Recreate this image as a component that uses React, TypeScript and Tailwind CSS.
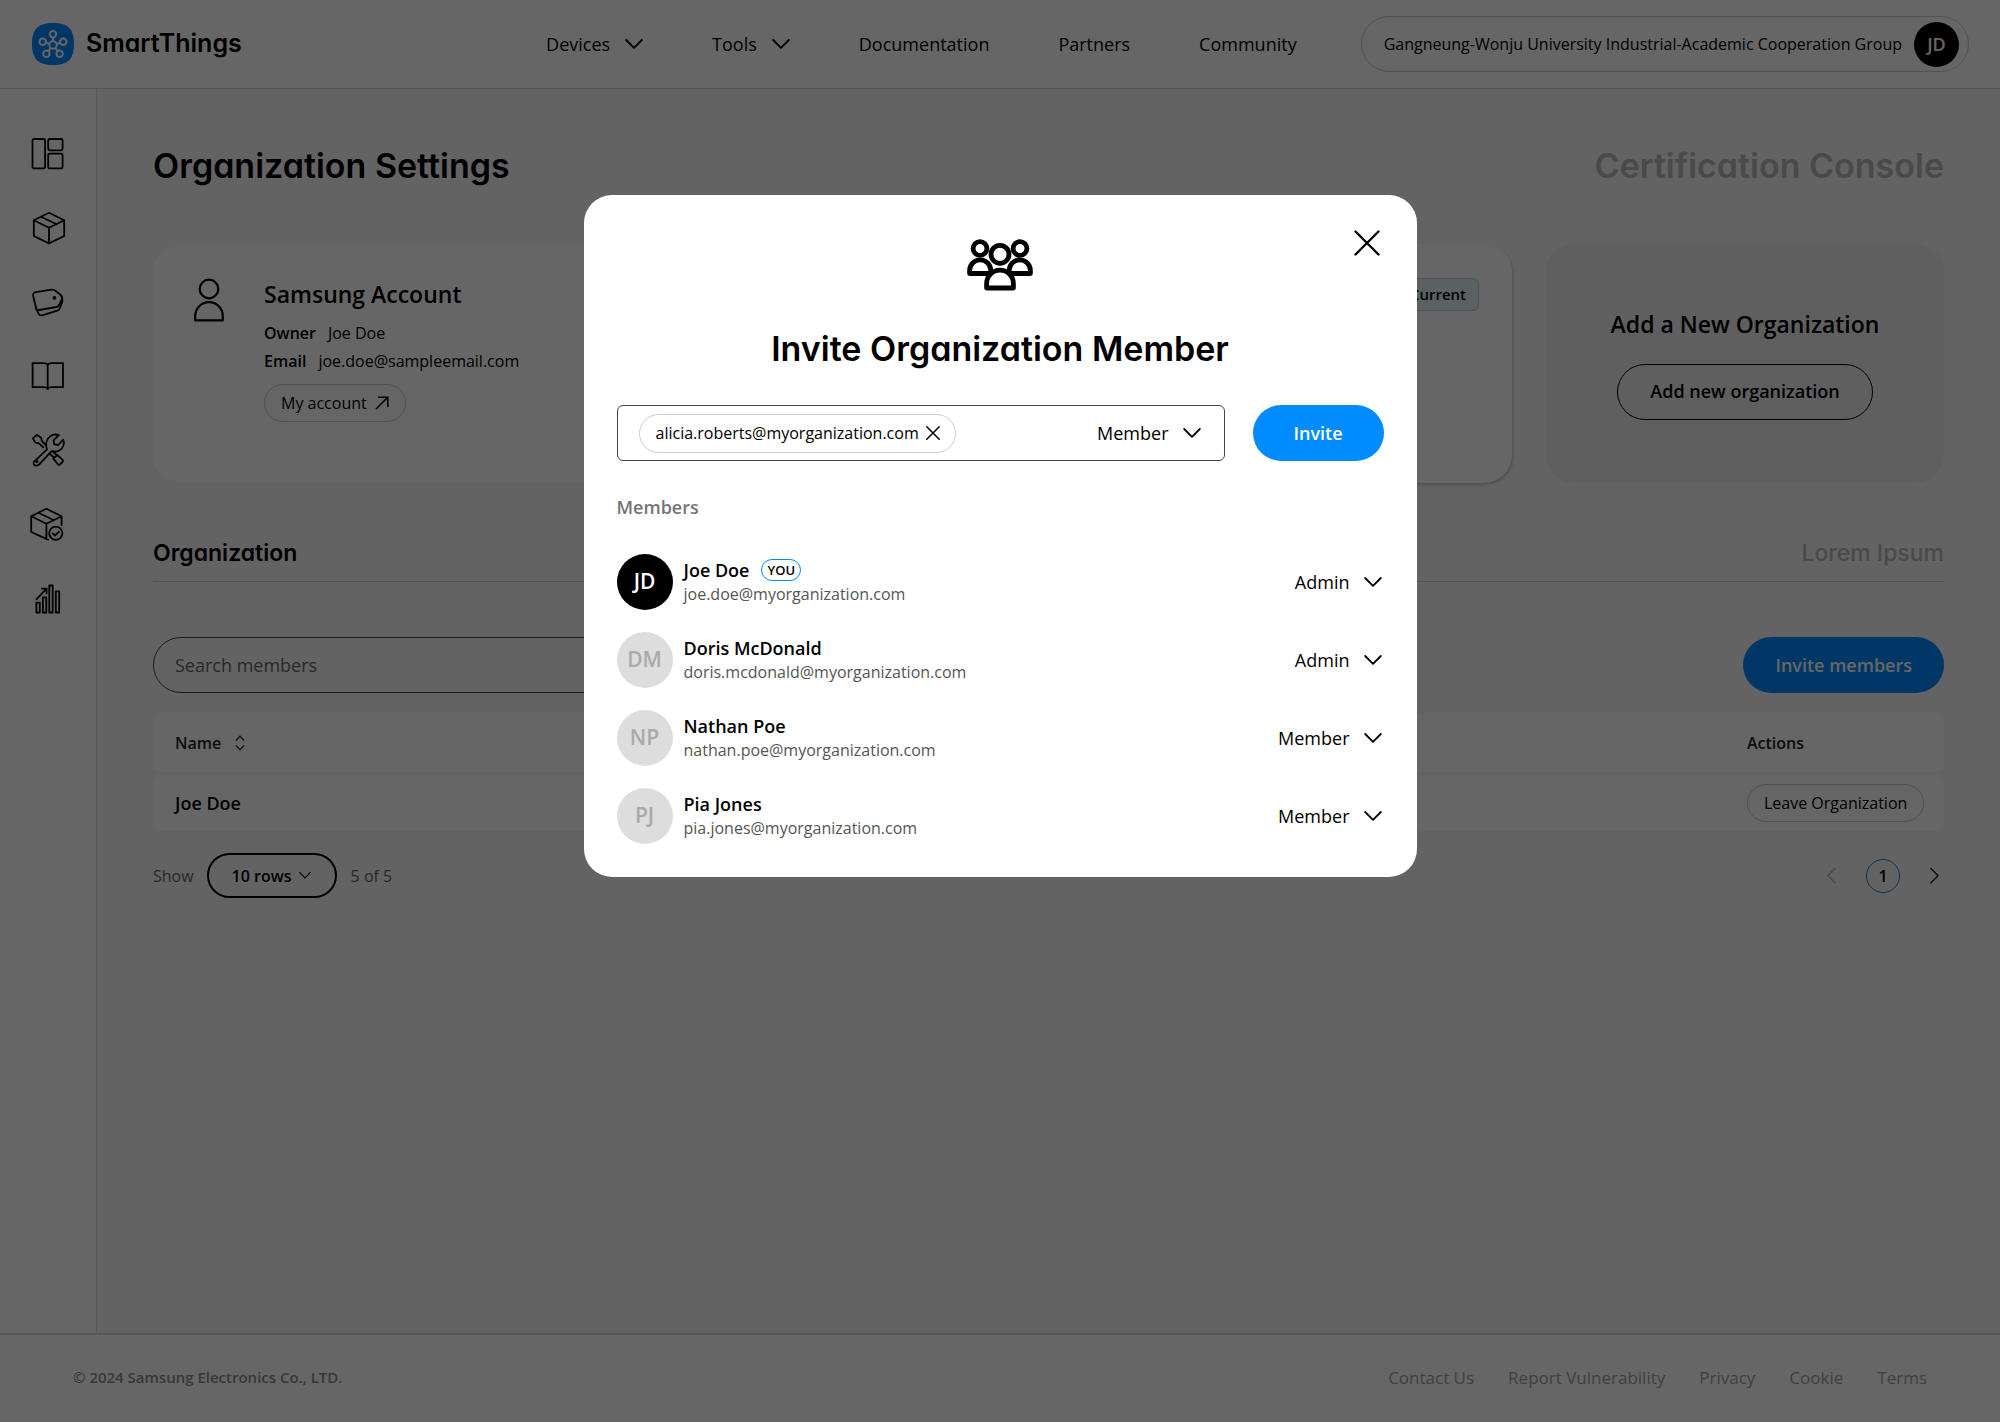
import React from "react";

type IconProps = { className?: string };

const display = "font-['Inter',sans-serif] [font-feature-settings:'cv11']";

function Chevron({ className = "w-[18px] [stroke-width:1.8]" }: IconProps) {
  return (
    <svg viewBox="0 0 18 10" className={className} fill="none" stroke="currentColor" strokeLinecap="round" strokeLinejoin="round" aria-hidden="true">
      <path d="M1.2 1 9 8.8 16.8 1" />
    </svg>
  );
}

function Cross({ className = "w-[26px] [stroke-width:2.4]" }: IconProps) {
  return (
    <svg viewBox="0 0 26 26" className={className} fill="none" stroke="currentColor" strokeLinecap="round" aria-hidden="true">
      <path d="M1.5 1.5 24.5 24.5M24.5 1.5 1.5 24.5" />
    </svg>
  );
}

function LogoMark() {
  return (
    <svg viewBox="0 0 42 42" className="w-[42px]" fill="none" stroke="white" strokeWidth="2" aria-hidden="true">
      <path d="M21 0C36 0 42 6 42 21S36 42 21 42 0 36 0 21 6 0 21 0Z" fill="#008bff" stroke="none" />
      <circle cx="21" cy="22" r="3.7" />
      <circle cx="21" cy="11.3" r="3.2" />
      <circle cx="10.7" cy="18.7" r="3.2" />
      <circle cx="31.3" cy="18.7" r="3.2" />
      <circle cx="14.4" cy="30.8" r="3.2" />
      <circle cx="27.6" cy="30.8" r="3.2" />
      <path d="M21 14.5v3.8M13.8 19.7l3.6 1.2M28.2 19.7l-3.6 1.2M16.3 28.2l2.5-3.3M25.7 28.2l-2.5-3.3" />
    </svg>
  );
}

function PeopleIcon() {
  return (
    <svg viewBox="0 0 66 52" className="w-[66px]" fill="white" stroke="black" strokeWidth="4.8" strokeLinejoin="round" aria-hidden="true">
      <circle cx="13" cy="9.5" r="6.9" />
      <circle cx="53" cy="9.5" r="6.9" />
      <path d="M2.6 34.5V31.5a10.6 10.6 0 0 1 21.2 0V34.5Z" />
      <path d="M42.2 34.5V31.5a10.6 10.6 0 0 1 21.2 0V34.5Z" />
      <circle cx="33" cy="15.3" r="9" />
      <path d="M19.6 49V44.5a13.4 13.4 0 0 1 26.8 0V49Z" />
    </svg>
  );
}

function UserIcon() {
  return (
    <svg viewBox="0 0 30 44" className="w-[30px]" fill="none" stroke="currentColor" strokeWidth="2.2" strokeLinejoin="round" aria-hidden="true">
      <circle cx="15" cy="11" r="9.3" />
      <path d="M1.2 42.4V38a13.8 13.8 0 0 1 27.6 0v4.4Z" />
    </svg>
  );
}

function Nav36({ children }: { children: React.ReactNode }) {
  return (
    <svg viewBox="0 0 36 36" className="size-9" fill="none" stroke="currentColor" strokeWidth="1.8" strokeLinejoin="round" strokeLinecap="round" aria-hidden="true">
      {children}
    </svg>
  );
}

const sideItems = [
  {
    label: "Dashboard",
    icon: (
      <Nav36>
        <rect x="2.5" y="3" width="12.6" height="29.4" rx="1.5" />
        <rect x="18.2" y="3" width="14.4" height="11.3" rx="1.5" />
        <rect x="18.2" y="17.6" width="14.4" height="14.8" rx="1.5" />
      </Nav36>
    ),
  },
  {
    label: "Products",
    icon: (
      <Nav36>
        <path d="M19 2.8 34.2 10.3V26L19 33.4 3.8 26V10.3ZM3.8 10.3 19 17.8 34.2 10.3M19 17.8V33.4M11 6.7 26.6 14.2" />
      </Nav36>
    ),
  },
  {
    label: "Tags",
    icon: (
      <Nav36>
        <path d="M6 8.2 21.5 5.6q2-.3 3.6.9l5.4 4.3q2.4 2 1.2 4.8l-2.6 5.2q-.7 1.7-2.5 2.2L9.3 26q-2.6.6-3.2-2L3.2 12.3Q2.5 8.8 6 8.2Z" />
        <path d="M6.2 24.4 8.5 29.6q1.2 2.4 3.8 1.7l14.9-4.6q1.8-.6 2.6-2.3l2.4-6.4q.3-1.2.1-3.4" />
        <circle cx="24.5" cy="13.8" r="1" fill="currentColor" />
      </Nav36>
    ),
  },
  {
    label: "Documents",
    icon: (
      <Nav36>
        <path d="M2.6 5.2H13q4.4 0 4.7 2.2Q18 5.2 22.4 5.2H33V29.2H22.4q-4.4 0-4.7 1.8-.3-1.8-4.7-1.8H2.6ZM17.7 7.4V31" />
      </Nav36>
    ),
  },
  {
    label: "Tools",
    icon: (
      <Nav36>
        <path d="M3.7 30.2 17 17.4C15.2 12 16.6 6.6 20.8 4c2.6-1.7 5.6-1.8 8-.8L23.6 8.4l.6 4 4 .6 5-5.4c1.2 3.2.5 6.8-1.8 9.2-2.8 2.8-6.6 3.4-9.8 2.4L9.2 32.4a3.6 3.6 0 0 1-5.2.2 3.2 3.2 0 0 1-.3-2.4Z" />
        <path d="M13.3 15.3 9 11.3 5.4 10.6 2.8 6.4 6.8 3 11 5.5l.9 3.5 3.9 4M20.6 22.3l3.6 3.7M23.3 20l3.7 3.6M23.3 26.6l4-3.6 5.4 4.8q.9 1-.2 2.2l-2.3 2.3q-1.2 1-2.2 0Z" />
        <circle cx="7" cy="29.4" r=".6" fill="currentColor" />
      </Nav36>
    ),
  },
  {
    label: "Certification",
    icon: (
      <Nav36>
        <path d="M18 33.6 1.2 26V10.3L16.4 2.8 31.6 10.3V19M1.2 10.3 16.4 17.8 31.6 10.3M16.4 17.8V33M8.4 6.7 24 14.2" />
        <circle cx="25.8" cy="27.2" r="6.6" />
        <path d="m22.8 27.4 2.2 2.2 4-4" />
      </Nav36>
    ),
  },
  {
    label: "Analytics",
    icon: (
      <Nav36>
        <path d="M6.4 22.6h3.4v9.9H6.4ZM12.9 17.4h3.4v15.1h-3.4ZM19.3 5.5h3.4v27h-3.4ZM25.8 11.3h3.4v21.2h-3.4ZM6.4 19.3 16.2 9M11.8 8.6h4.8v4.8" />
      </Nav36>
    ),
  },
];

const navItems = [
  { label: "Devices", menu: true },
  { label: "Tools", menu: true },
  { label: "Documentation", menu: false },
  { label: "Partners", menu: false },
  { label: "Community", menu: false },
];

const members = [
  { initials: "JD", name: "Joe Doe", email: "joe.doe@myorganization.com", role: "Admin", you: true },
  { initials: "DM", name: "Doris McDonald", email: "doris.mcdonald@myorganization.com", role: "Admin", you: false },
  { initials: "NP", name: "Nathan Poe", email: "nathan.poe@myorganization.com", role: "Member", you: false },
  { initials: "PJ", name: "Pia Jones", email: "pia.jones@myorganization.com", role: "Member", you: false },
];

function RoleSelect({ label, value }: { label: string; value: string }) {
  return (
    <div className="relative flex items-center">
      <select aria-label={label} defaultValue={value} className="h-8 appearance-none bg-transparent pr-8 text-[18px] [field-sizing:content]">
        <option>Admin</option>
        <option>Member</option>
      </select>
      <Chevron className="pointer-events-none absolute right-0 w-[18px] [stroke-width:1.8]" />
    </div>
  );
}

function Header() {
  return (
    <header className="flex h-[89px] items-center border-b border-[#d4d4d4] bg-white pr-[31px] pl-8">
      <a href="#home" className="flex items-center gap-3">
        <LogoMark />
        <span className={`${display} text-[25px] font-semibold`}>SmartThings</span>
      </a>
      <nav className="ml-auto flex items-center gap-[69px] text-[18px]">
        {navItems.map((item) =>
          item.menu ? (
            <button key={item.label} className="flex items-center gap-[15px]">
              {item.label}
              <Chevron />
            </button>
          ) : (
            <a key={item.label} href={`#${item.label}`}>
              {item.label}
            </a>
          ),
        )}
      </nav>
      <button className="ml-16 flex h-14 items-center gap-3 rounded-full border border-[#cccccc] pr-[9px] pl-[22px] text-[16px]">
        Gangneung-Wonju University Industrial-Academic Cooperation Group
        <span className="flex size-[45px] items-center justify-center rounded-full bg-black text-[18px] font-semibold text-white">JD</span>
      </button>
    </header>
  );
}

function Cards() {
  return (
    <section className="mt-14 flex gap-[34px]">
      <article className="flex h-[239px] flex-1 rounded-[28px] bg-white pt-[34px] pl-[41px]">
        <div className="w-[70px]">
          <UserIcon />
        </div>
        <div>
          <h2 className="text-[23px] leading-8 font-semibold">Samsung Account</h2>
          <dl className="mt-[9px] text-[16px] leading-7">
            <div className="flex gap-3">
              <dt className="font-semibold">Owner</dt>
              <dd>Joe Doe</dd>
            </div>
            <div className="flex gap-3">
              <dt className="font-semibold">Email</dt>
              <dd>joe.doe@sampleemail.com</dd>
            </div>
          </dl>
          <a href="#account" className="mt-[9px] inline-flex h-[38px] items-center gap-2 rounded-full border border-[#cccccc] px-4 text-[16px]">
            My account
            <svg viewBox="0 0 14 14" className="w-[14px]" fill="none" stroke="currentColor" strokeWidth="1.6" aria-hidden="true">
              <path d="M1 13 12.5 1.5M3 1.2h9.8V11" />
            </svg>
          </a>
        </div>
      </article>
      <article className="flex h-[239px] flex-1 items-start justify-end rounded-[28px] bg-white pt-[34px] pr-[33px] shadow-[1px_2px_3px_rgba(0,0,0,0.2)]">
        <span className="flex h-[33px] items-center rounded-md border border-[#a8d4f5] bg-[#e3eff8] px-3 text-[15px] font-semibold">Current</span>
      </article>
      <article className="flex h-[239px] w-[398px] flex-col items-center justify-center rounded-[28px] bg-[#eeeeee]">
        <h2 className="text-[23px] leading-8 font-semibold">Add a New Organization</h2>
        <button className="mt-6 h-14 rounded-full border border-black px-8 text-[18px] font-semibold">Add new organization</button>
      </article>
    </section>
  );
}

function MembersTable() {
  return (
    <table className="mt-[17px] w-full border-separate border-spacing-y-1 text-left">
      <thead>
        <tr className="h-[57px] text-[16px] text-[#222222]">
          <th className="rounded-l-lg bg-white pl-[22px] font-semibold">
            <button className="flex items-center gap-[14px]">
              Name
              <svg viewBox="0 0 10 16" className="w-[10px]" fill="none" stroke="currentColor" strokeWidth="1.2" aria-hidden="true">
                <path d="M1 5.5 5 1.2 9 5.5M1 10.5 5 14.8 9 10.5" />
              </svg>
            </button>
          </th>
          <th className="w-[197px] rounded-r-lg bg-white font-semibold">Actions</th>
        </tr>
      </thead>
      <tbody>
        <tr className="h-14">
          <td className="rounded-l-lg bg-white pl-[22px] text-[18px] font-semibold">Joe Doe</td>
          <td className="rounded-r-lg bg-white">
            <button className="h-[38px] rounded-full border border-[#cccccc] px-4 text-[16px]">Leave Organization</button>
          </td>
        </tr>
      </tbody>
    </table>
  );
}

function Pager() {
  return (
    <div className="mt-[18px] flex items-center text-[16px] text-[#666666]">
      <span>Show</span>
      <div className="relative ml-[13px] flex items-center text-black">
        <select aria-label="Rows per page" className="h-[45px] appearance-none rounded-full border-2 border-black pr-[43px] pl-[23px] font-semibold [field-sizing:content]">
          <option>10 rows</option>
          <option>20 rows</option>
        </select>
        <Chevron className="pointer-events-none absolute right-[26px] w-3 [stroke-width:1.8]" />
      </div>
      <span className="ml-[14px]">5 of 5</span>
      <nav aria-label="Pages" className="mr-px ml-auto flex items-center">
        <button aria-label="Previous page" disabled className="text-[#b4b4b4]">
          <Chevron className="w-[17px] rotate-90 [stroke-width:1.5]" />
        </button>
        <button className="mx-[26px] size-[34px] rounded-full border border-[#008bff] font-semibold text-black">1</button>
        <button aria-label="Next page" className="text-[#222222]">
          <Chevron className="w-[17px] -rotate-90 [stroke-width:1.5]" />
        </button>
      </nav>
    </div>
  );
}

function Footer() {
  return (
    <footer className="flex h-[89px] items-center justify-between border-t-2 border-[#dddddd] bg-white px-[73px] pb-0.5 text-[#a0a0a0]">
      <small className="text-[15px] font-semibold text-[#8c8c8c]">© 2024 Samsung Electronics Co., LTD.</small>
      <nav className="flex gap-[34px] text-[17px]">
        {["Contact Us", "Report Vulnerability", "Privacy", "Cookie", "Terms"].map((t) => (
          <a key={t} href={`#${t}`}>
            {t}
          </a>
        ))}
      </nav>
    </footer>
  );
}

function InviteDialog() {
  return (
    <div className="fixed inset-0 flex items-start justify-center overflow-auto bg-black/60 pt-[195px]">
      <section role="dialog" aria-modal="true" aria-labelledby="invite-title" className="relative w-[833px] rounded-[28px] bg-white px-[33px] pt-11 pb-[33px]">
        <button aria-label="Close" className="absolute top-[35px] right-[37px]">
          <Cross />
        </button>
        <div className="flex justify-center">
          <PeopleIcon />
        </div>
        <h2 id="invite-title" className={`${display} mt-9 text-center text-[34px] leading-[44px] font-semibold`}>
          Invite Organization Member
        </h2>
        <form className="mt-[34px] flex gap-7" onSubmit={(e) => e.preventDefault()}>
          <div className="flex h-14 flex-1 items-center rounded-md border border-[#444444] pr-[23px] pl-[21px]">
            <span className="flex h-[39px] items-center gap-[7px] rounded-full border border-[#cccccc] pr-[15px] pl-4 text-[16px]">
              alicia.roberts@myorganization.com
              <button type="button" aria-label="Remove alicia.roberts@myorganization.com">
                <Cross className="w-[14px] [stroke-width:2.8]" />
              </button>
            </span>
            <input aria-label="Email address" type="email" className="w-0 flex-1 outline-none" />
            <RoleSelect label="Role for invited members" value="Member" />
          </div>
          <button className="h-14 w-[131px] rounded-full bg-[#008bff] text-[18px] font-semibold text-white">Invite</button>
        </form>
        <h3 className="mt-8 text-[18px] leading-7 font-semibold text-[#757575]">Members</h3>
        <ul className="mt-[33px] flex flex-col gap-[22px]">
          {members.map((m) => (
            <li key={m.name} className="flex h-14 items-center">
              <span
                className={
                  m.you
                    ? "flex size-14 items-center justify-center rounded-full bg-black pb-px text-[21px] font-semibold text-white"
                    : "flex size-14 items-center justify-center rounded-full bg-[#dddddd] pb-px text-[21px] font-semibold text-[#aaaaaa]"
                }
              >
                {m.initials}
              </span>
              <div className="ml-[11px] flex-1">
                <div className="flex items-center gap-3 text-[18px] leading-6 font-semibold">
                  {m.name}
                  {m.you && <span className="flex h-[22px] items-center rounded-full border border-[#008bff] px-[5px] text-[13px] leading-4">YOU</span>}
                </div>
                <div className="text-[16px] leading-6 text-[#555555]">{m.email}</div>
              </div>
              <div className="pr-0.5">
                <RoleSelect label={`Role for ${m.name}`} value={m.role} />
              </div>
            </li>
          ))}
        </ul>
      </section>
    </div>
  );
}

export default function App() {
  return (
    <div className="flex min-h-screen flex-col bg-[#f7f7f7] font-['Open_Sans',sans-serif] text-black">
      <Header />
      <div className="flex flex-1">
        <aside className="w-[97px] border-r border-[#dddddd] bg-white pt-[47px]">
          <nav aria-label="Sections" className="flex flex-col items-center gap-[38px]">
            {sideItems.map((s) => (
              <a key={s.label} href={`#${s.label}`} aria-label={s.label}>
                {s.icon}
              </a>
            ))}
          </nav>
        </aside>
        <main className="flex-1 px-14 pt-[55px]">
          <div className={`${display} flex justify-between text-[34px] leading-[44px] font-semibold`}>
            <h1>Organization Settings</h1>
            <a href="#console" className="text-[#b8b8b8]">
              Certification Console
            </a>
          </div>
          <Cards />
          <div className={`${display} mt-[53px] flex justify-between border-b border-[#d0d0d0] pb-[11px] text-[23px] leading-[34px] font-semibold`}>
            <a href="#organization">Organization</a>
            <a href="#lorem" className="font-medium text-[#b8b8b8]">
              Lorem Ipsum
            </a>
          </div>
          <div className="mt-[55px] flex justify-between">
            <input aria-label="Search members" placeholder="Search members" className="h-14 w-[600px] rounded-full border border-[#444444] px-[21px] text-[18px] placeholder:text-[#666666]" />
            <button className="h-14 rounded-full bg-[#008bff] px-8 text-[18px] font-semibold text-white">Invite members</button>
          </div>
          <MembersTable />
          <Pager />
        </main>
      </div>
      <Footer />
      <InviteDialog />
    </div>
  );
}
